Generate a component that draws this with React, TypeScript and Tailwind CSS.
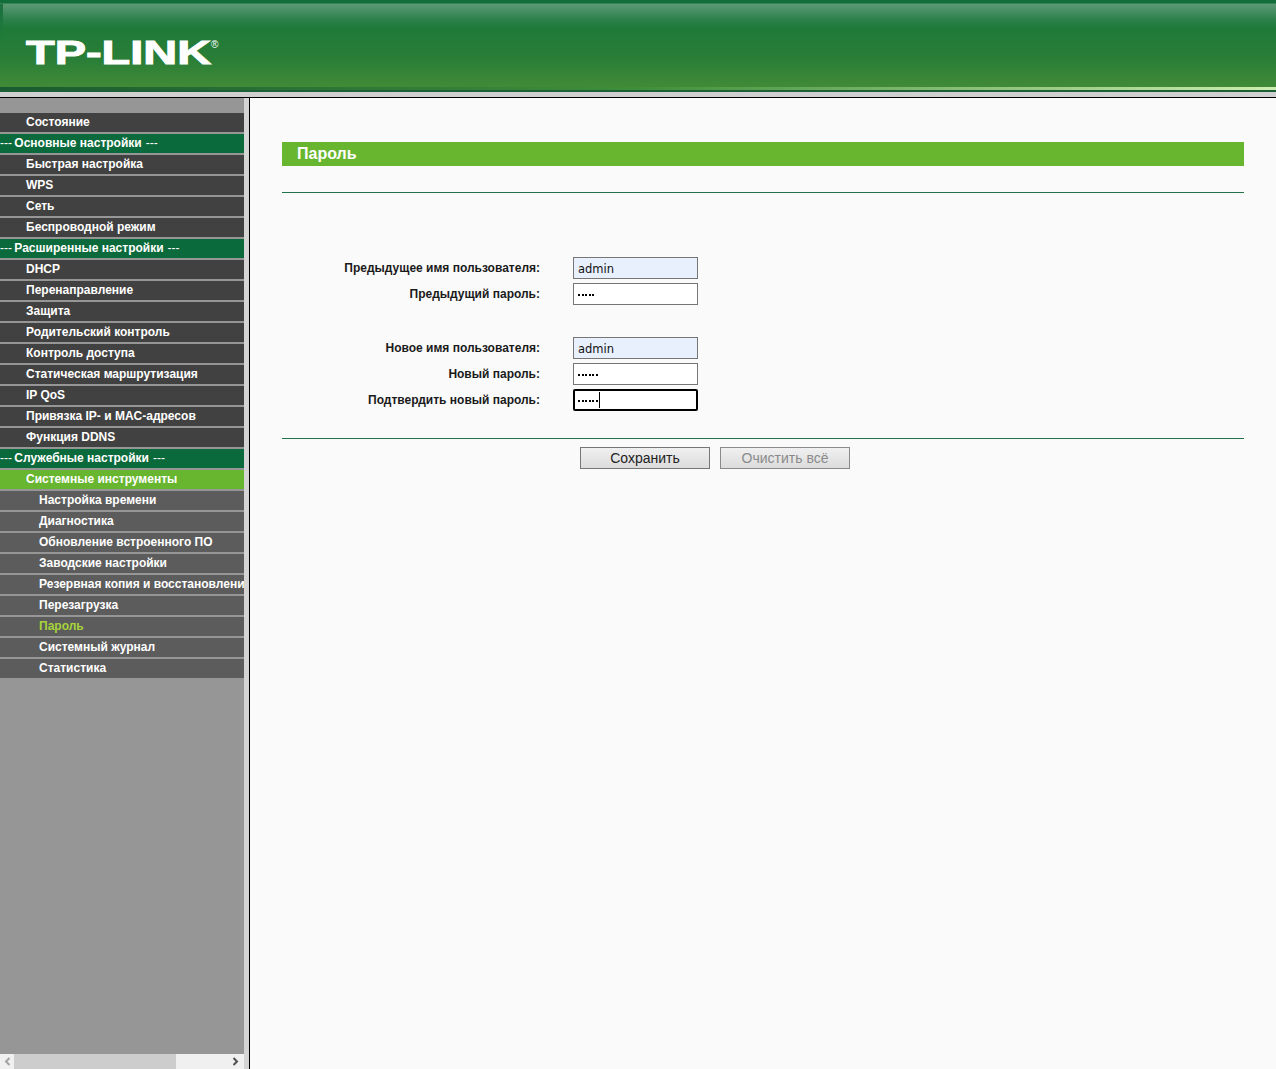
const FONT = { fontFamily: '"Liberation Sans", Arial, sans-serif' };

type Row = { label: string; kind: "top" | "group" | "open" | "sub" | "current" };

const MENU: Row[] = [
  { label: "Состояние", kind: "top" },
  { label: "Основные настройки", kind: "group" },
  { label: "Быстрая настройка", kind: "top" },
  { label: "WPS", kind: "top" },
  { label: "Сеть", kind: "top" },
  { label: "Беспроводной режим", kind: "top" },
  { label: "Расширенные настройки", kind: "group" },
  { label: "DHCP", kind: "top" },
  { label: "Перенаправление", kind: "top" },
  { label: "Защита", kind: "top" },
  { label: "Родительский контроль", kind: "top" },
  { label: "Контроль доступа", kind: "top" },
  { label: "Статическая маршрутизация", kind: "top" },
  { label: "IP QoS", kind: "top" },
  { label: "Привязка IP- и MAC-адресов", kind: "top" },
  { label: "Функция DDNS", kind: "top" },
  { label: "Служебные настройки", kind: "group" },
  { label: "Системные инструменты", kind: "open" },
  { label: "Настройка времени", kind: "sub" },
  { label: "Диагностика", kind: "sub" },
  { label: "Обновление встроенного ПО", kind: "sub" },
  { label: "Заводские настройки", kind: "sub" },
  { label: "Резервная копия и восстановление", kind: "sub" },
  { label: "Перезагрузка", kind: "sub" },
  { label: "Пароль", kind: "current" },
  { label: "Системный журнал", kind: "sub" },
  { label: "Статистика", kind: "sub" },
];

const ROW_CLASS: Record<Row["kind"], string> = {
  top: "bg-[#414141] pl-[26px] text-white",
  group: "bg-[#0b6a3b] text-white",
  open: "bg-[#68b62f] pl-[26px] text-white",
  sub: "bg-[#5c5c5c] pl-[39px] text-white",
  current: "bg-[#5c5c5c] pl-[39px] text-[#a6d43a]",
};

function Sidebar() {
  return (
    <aside className="relative flex w-[244px] shrink-0 flex-col overflow-hidden bg-[#969696] pt-[15px]">
      <nav className="flex flex-col gap-[2px]">
        {MENU.map((row) => (
          <div
            key={row.label}
            className={`flex h-[19px] items-center overflow-hidden whitespace-nowrap pb-[2px] text-[12px] font-bold ${ROW_CLASS[row.kind]}`}
          >
            {row.kind === "group" ? (
              <>
                <span className="font-normal">---&nbsp;</span>
                <span className="-ml-[1px]">{row.label}</span>
                <span className="ml-[4px] font-normal">---</span>
              </>
            ) : (
              row.label
            )}
          </div>
        ))}
      </nav>
      <div className="mt-auto flex h-[15px] items-center bg-[#f0f0f0]">
        <div className="flex w-[14px] justify-center">
          <svg width="7" height="9" viewBox="0 0 7 9">
            <path d="M5.5 1 2 4.5 5.5 8" fill="none" stroke="#a3a3a3" strokeWidth="2" />
          </svg>
        </div>
        <div className="h-full w-[162px] bg-[#cdcdcd]" />
        <div className="ml-auto flex w-[17px] justify-center">
          <svg width="7" height="9" viewBox="0 0 7 9">
            <path d="M1.5 1 5 4.5 1.5 8" fill="none" stroke="#505050" strokeWidth="2" />
          </svg>
        </div>
      </div>
    </aside>
  );
}

function Field({
  label,
  value,
  password,
  focused,
  className = "",
}: {
  label: string;
  value: string;
  password?: boolean;
  focused?: boolean;
  className?: string;
}) {
  const box = focused
    ? "rounded-[2px] border-2 border-black bg-white"
    : password
      ? "border border-[#767676] bg-white"
      : "border border-[#767676] bg-[#e8f0fe]";
  return (
    <div className={`flex h-[22px] items-center ${className}`}>
      <div className="w-[258px] text-right text-[12px] font-bold text-[#1a1a1a]">{label}</div>
      <div
        className={`ml-[33px] flex h-[22px] w-[125px] items-center ${focused ? "pl-[3px]" : "pl-[4px]"} ${box}`}
      >
        {password ? (
          <span className="flex items-center gap-[1.5px]">
            {value.split("").map((_, i) => (
              <span key={i} className="mt-[2px] h-[2px] w-[2px] bg-black" />
            ))}
            {focused && <span className="h-[16px] w-px bg-black" />}
          </span>
        ) : (
          <span className="pt-[3px] font-['DejaVu_Sans',sans-serif] text-[11.5px] text-[#111]">{value}</span>
        )}
      </div>
    </div>
  );
}

function Main() {
  return (
    <main className="flex-1 border-l border-black bg-[#fafafa] pl-[32px] pr-[32px] pt-[44px]">
      <div className="flex h-[24px] items-center bg-[#68b62f] pl-[15px] text-[16px] font-bold text-white">Пароль</div>
      <div className="mt-[26px] h-px bg-[#22734a]" />
      <div className="mt-[64px]">
        <Field label="Предыдущее имя пользователя:" value="admin" />
        <Field className="mt-[4px]" label="Предыдущий пароль:" value="admin" password />
        <Field className="mt-[32px]" label="Новое имя пользователя:" value="admin" />
        <Field className="mt-[4px]" label="Новый пароль:" value="admin1" password />
        <Field className="mt-[4px]" label="Подтвердить новый пароль:" value="admin1" password focused />
      </div>
      <div className="mt-[27px] h-px bg-[#22734a]" />
      <div className="mt-[8px] flex gap-[10px] pl-[298px]">
        <button className="h-[22px] w-[130px] border border-[#767676] bg-gradient-to-b from-[#f0f0f0] to-[#dcdcdc] text-[14px] text-[#222]">
          Сохранить
        </button>
        <button className="h-[22px] w-[130px] border border-[#8a8a8a] bg-gradient-to-b from-[#f0f0f0] to-[#dcdcdc] text-[14px] text-[#8a8a8a]">
          Очистить всё
        </button>
      </div>
    </main>
  );
}

export default function App() {
  return (
    <div className="flex h-[1069px] w-[1276px] flex-col overflow-hidden bg-white" style={FONT}>
      <header className="shrink-0">
        <div className="relative h-[87px] overflow-hidden bg-[linear-gradient(to_bottom,#116d3a_0px,#116d3a_3px,#5c9a76_4px,#2b7f4a_20px,#1f7a39_28px,#2a7e37_60px,#418b37_87px)]">
          <div className="absolute bottom-0 left-0 top-[4px] w-[3px] bg-[linear-gradient(to_bottom,#1c7040,#1f7a39_30px,transparent_40px)]" />
          <span className="absolute left-[26px] top-[35px] origin-left scale-x-[1.38] text-[34px] font-bold leading-[34px] text-white [-webkit-text-stroke:1px_white]">
            TP-LINK
          </span>
          <span className="absolute left-[211px] top-[40px] text-[10px] leading-none text-white">®</span>
        </div>
        <div className="h-[3px] bg-[linear-gradient(to_right,#1a5a30,#3f8f3a_50%,#cdeeb0)]" />
        <div className="h-[2px] bg-[#1d5f36]" />
        <div className="h-[5px] bg-[#d0d0d0]" />
        <div className="h-px bg-black" />
      </header>
      <div className="flex min-h-0 flex-1">
        <Sidebar />
        <div className="w-[5px] shrink-0 bg-[#d4d4d4]" />
        <Main />
      </div>
    </div>
  );
}
